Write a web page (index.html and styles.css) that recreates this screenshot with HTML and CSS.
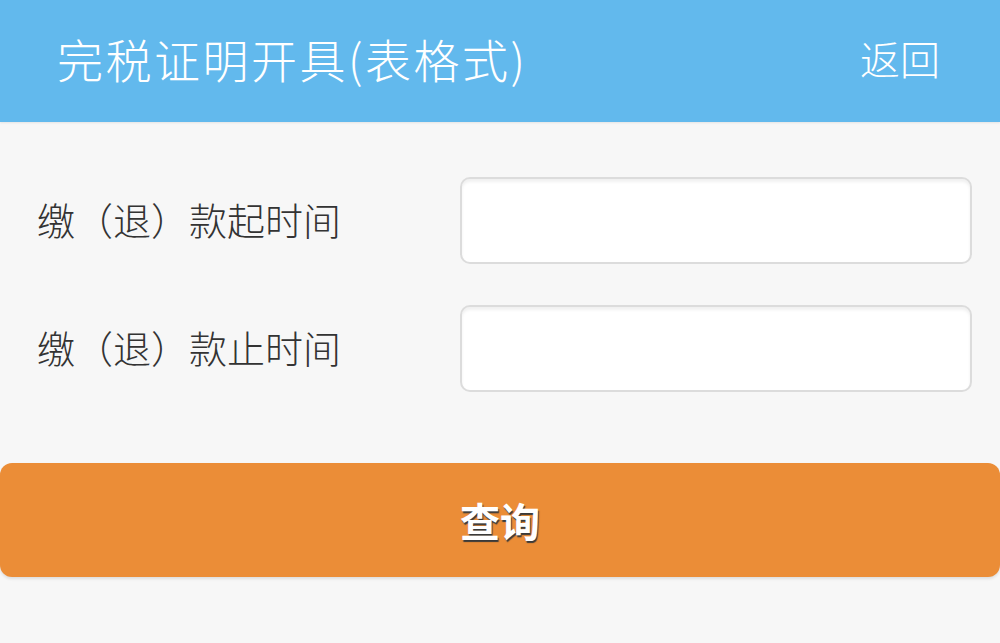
FILE: index.html
```html
<!DOCTYPE html>
<html lang="zh-CN">
<head>
  <meta charset="UTF-8" />
  <title>完税证明开具(表格式)</title>
  <link rel="stylesheet" href="styles.css">
</head>
<body>

  <div class="header">
    <h1 class="title">完税证明开具(表格式)</h1>
    <a class="back" href="#">返回</a>
  </div>

  <div class="form">
    <div class="row">
      <label for="startDate">缴（退）款起时间</label>
      <input type="text" id="startDate" />
    </div>
    <div class="row">
      <label for="endDate">缴（退）款止时间</label>
      <input type="text" id="endDate" />
    </div>
  </div>

  <button class="search-btn">查询</button>

</body>
</html>
```

FILE: styles.css
```css
body {
  margin: 0;
  background: #f7f7f7;
  font-family: "Noto Sans CJK SC", "Noto Sans", sans-serif;
  height: 643px;
  overflow: hidden;
}
.header {
  height: 122px;
  background: #62b9ed;
  display: flex;
  align-items: center;
  justify-content: space-between;
  padding: 0 60px 0 57px;
  box-shadow: 0 1px 2px rgba(0, 0, 0, 0.08);
}
.title {
  margin: 0 0 6px;
  font-size: 46px;
  font-weight: 300;
  letter-spacing: 2.5px;
  color: #fff;
}
.back {
  color: #fff;
  font-size: 40px;
  font-weight: 300;
  text-decoration: none;
  margin-bottom: 6px;
}
.form {
  padding: 55px 28px 0 37px;
  display: flex;
  flex-direction: column;
  gap: 41px;
}
.row {
  display: flex;
  align-items: center;
}
.row label {
  width: 423px;
  font-size: 38px;
  font-weight: 300;
  color: #333;
  margin-top: -4px;
}
.row input {
  flex: 1;
  height: 87px;
  box-sizing: border-box;
  border: 2px solid #dcdcdc;
  border-radius: 10px;
  background: #fff;
  box-shadow: inset 0 3px 3px rgba(0, 0, 0, 0.06);
  font-size: 30px;
  padding: 0 16px;
  outline: none;
}
.search-btn {
  display: block;
  width: 1000px;
  height: 114px;
  margin-top: 71px;
  border: none;
  border-radius: 12px;
  background: #eb8d37;
  color: #fff;
  font-family: "Noto Sans CJK SC", sans-serif;
  font-size: 40px;
  font-weight: bold;
  text-shadow: 1px 2px 1px #3a3a3a;
  box-shadow: 0 2px 3px rgba(0, 0, 0, 0.1);
}
```
